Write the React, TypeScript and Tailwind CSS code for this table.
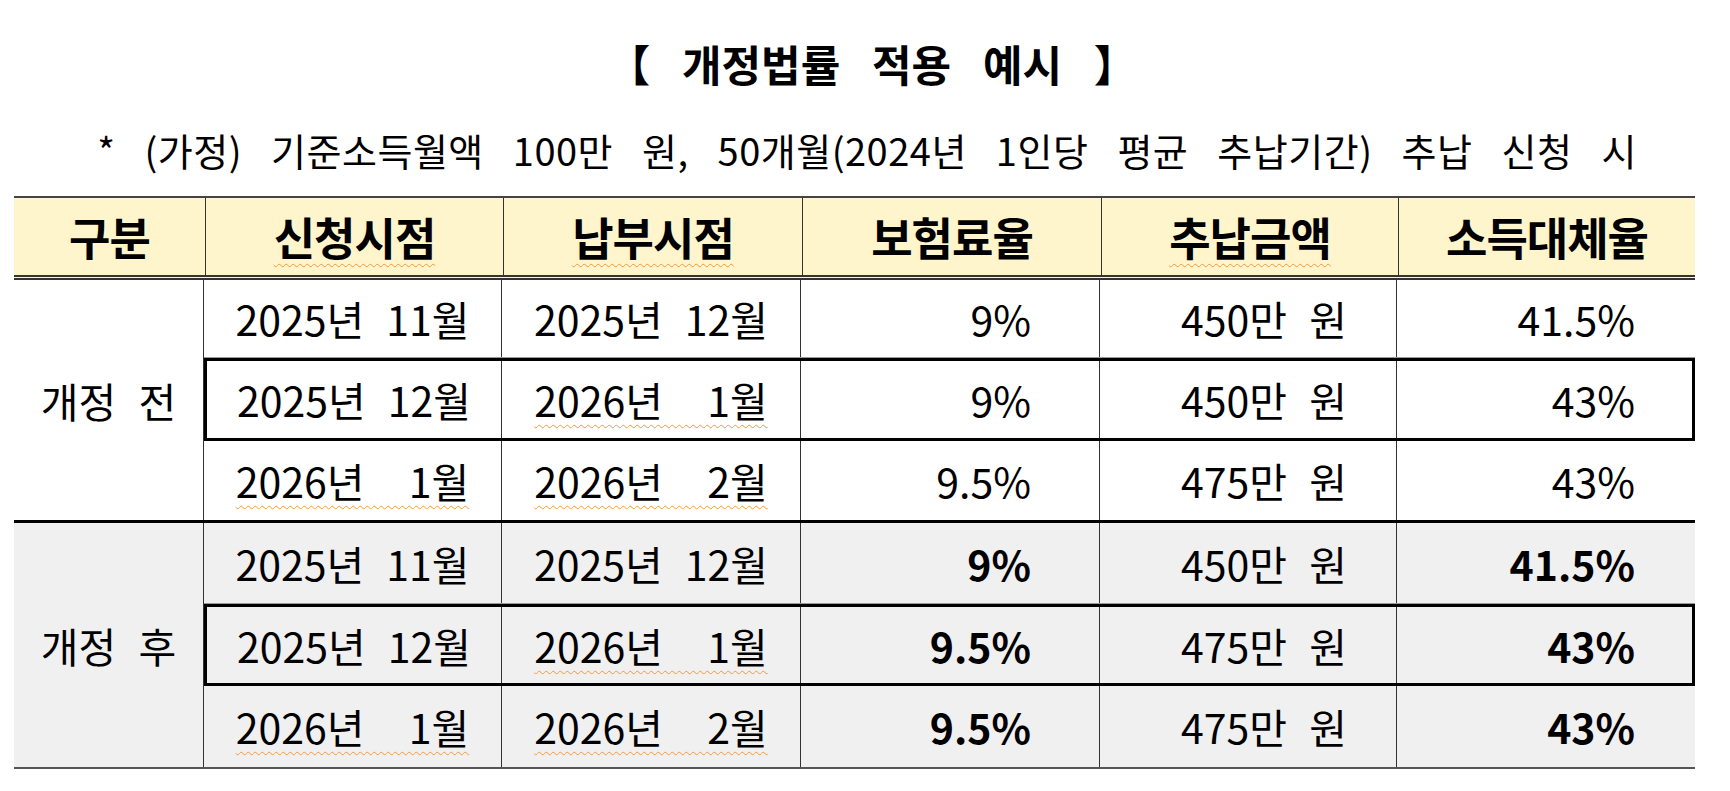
import React from 'react'

type Row = {
  a: string
  b: string
  rate: string
  amt: string
  repl: string
  ulA?: boolean
  ulB?: boolean
}

const before: Row[] = [
  { a: '2025년 11월', b: '2025년 12월', rate: '9%', amt: '450만 원', repl: '41.5%' },
  { a: '2025년 12월', b: '2026년  1월', rate: '9%', amt: '450만 원', repl: '43%', ulB: true },
  { a: '2026년  1월', b: '2026년  2월', rate: '9.5%', amt: '475만 원', repl: '43%', ulA: true, ulB: true },
]

const after: Row[] = [
  { a: '2025년 11월', b: '2025년 12월', rate: '9%', amt: '450만 원', repl: '41.5%' },
  { a: '2025년 12월', b: '2026년  1월', rate: '9.5%', amt: '475만 원', repl: '43%', ulB: true },
  { a: '2026년  1월', b: '2026년  2월', rate: '9.5%', amt: '475만 원', repl: '43%', ulA: true, ulB: true },
]

function Txt({ children, ul }: { children: React.ReactNode; ul?: boolean }) {
  return (
    <span
      className={
        ul
          ? 'whitespace-pre underline decoration-wavy decoration-1 decoration-[#f39a3a] underline-offset-[7px]'
          : 'whitespace-pre'
      }
    >
      {children}
    </span>
  )
}

function DataRow({ row, boxed, bold, h }: { row: Row; boxed?: boolean; bold?: boolean; h: string }) {
  const num = bold ? 'font-bold' : ''
  if (boxed) {
    return (
      <div className={`flex w-[1491px] border-[3px] border-black ${h}`}>
        <div className="flex w-[294px] items-center justify-center">
          <Txt ul={row.ulA}>{row.a}</Txt>
        </div>
        <div className="flex w-[299px] items-center justify-center border-l border-[#333]">
          <Txt ul={row.ulB}>{row.b}</Txt>
        </div>
        <div className={`flex w-[299px] items-center justify-end border-l border-[#333] pr-[68px] ${num}`}>
          {row.rate}
        </div>
        <div className="flex w-[297px] items-center justify-end border-l border-[#333] pr-[49px]">
          <Txt>{row.amt}</Txt>
        </div>
        <div className={`flex w-[296px] items-center justify-end border-l border-[#333] pr-[57px] ${num}`}>
          {row.repl}
        </div>
      </div>
    )
  }
  return (
    <div className={`flex w-[1489px] ${h}`}>
      <div className="flex w-[297px] items-center justify-center">
        <Txt ul={row.ulA}>{row.a}</Txt>
      </div>
      <div className="flex w-[299px] items-center justify-center border-l border-[#333]">
        <Txt ul={row.ulB}>{row.b}</Txt>
      </div>
      <div className={`flex w-[299px] items-center justify-end border-l border-[#333] pr-[68px] ${num}`}>
        {row.rate}
      </div>
      <div className="flex w-[297px] items-center justify-end border-l border-[#333] pr-[49px]">
        <Txt>{row.amt}</Txt>
      </div>
      <div className={`flex w-[297px] items-center justify-end border-l border-[#333] pr-[58px] ${num}`}>
        {row.repl}
      </div>
    </div>
  )
}

export default function App() {
  return (
    <div className="h-[791px] w-full bg-white font-['Noto_Sans_CJK_KR','Noto_Sans',sans-serif] text-black">
      <div className="flex h-[126px] items-center justify-center pl-[14px] text-[43px] font-bold leading-none [word-spacing:22px]">
        【 개정법률 적용 예시 】
      </div>
      <div className="flex h-[48px] items-center justify-center pl-[4px] text-[38px] leading-none tracking-[0.5px] [word-spacing:20px]">
        * (가정) 기준소득월액 100만 원, 50개월(2024년 1인당 평균 추납기간) 추납 신청 시
      </div>

      <div className="ml-[14px] mt-[22px] w-[1681px] border-t-2 border-[#444] text-[41px] leading-none [word-spacing:13px]">
        {/* header */}
        <div className="flex h-[82px] border-b-[5px] border-double border-[#333] bg-[#fff5cc] text-[45px] font-bold tracking-[-1px]">
          <div className="flex w-[192px] items-center justify-center border-r border-[#333]">구분</div>
          <div className="flex w-[297px] items-center justify-center">
            <Txt ul>신청시점</Txt>
          </div>
          <div className="flex w-[299px] items-center justify-center border-l border-[#333]">
            <Txt ul>납부시점</Txt>
          </div>
          <div className="flex w-[299px] items-center justify-center border-l border-[#333]">보험료율</div>
          <div className="flex w-[297px] items-center justify-center border-l border-[#333]">
            <Txt ul>추납금액</Txt>
          </div>
          <div className="flex w-[297px] items-center justify-center border-l border-[#333]">소득대체율</div>
        </div>

        {/* 개정 전 */}
        <div className="flex">
          <div className="flex w-[192px] items-center justify-center border-r border-[#333]">개정 전</div>
          <div className="flex flex-col">
            <div className="border-b border-[#999]">
              <DataRow row={before[0]} h="h-[77px]" />
            </div>
            <DataRow row={before[1]} boxed h="h-[83px]" />
            <DataRow row={before[2]} h="h-[79px]" />
          </div>
        </div>

        {/* 개정 후 */}
        <div className="flex border-t-[3px] border-b-2 border-t-black border-b-[#555] bg-[#f0f0f0]">
          <div className="flex w-[192px] items-center justify-center border-r border-[#333]">개정 후</div>
          <div className="flex flex-col">
            <div className="border-b border-[#999]">
              <DataRow row={after[0]} bold h="h-[80px]" />
            </div>
            <DataRow row={after[1]} boxed bold h="h-[82px]" />
            <DataRow row={after[2]} bold h="h-[81px]" />
          </div>
        </div>
      </div>
    </div>
  )
}
